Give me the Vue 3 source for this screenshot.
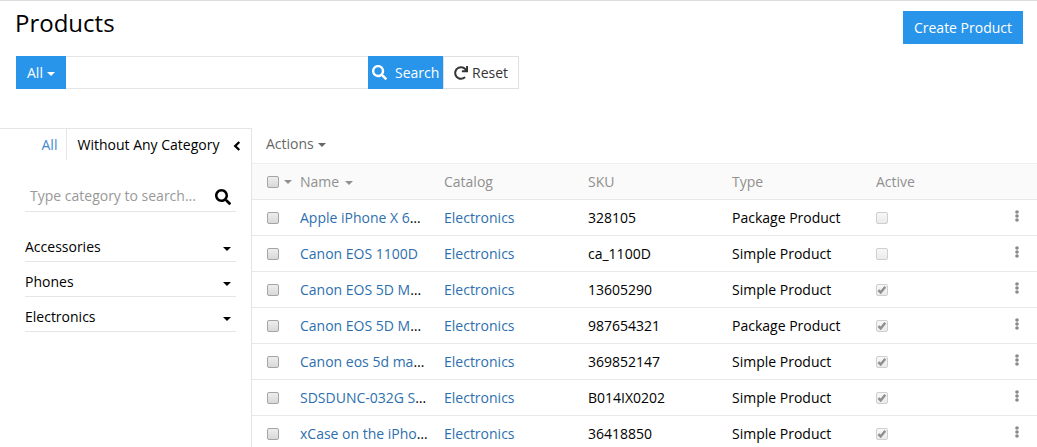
<script setup>
const categories = ['Accessories', 'Phones', 'Electronics']
const columns = ['Catalog', 'SKU', 'Type', 'Active']
const products = [
  { name: 'Apple iPhone X 6', cut: true, sku: '328105', type: 'Package Product', active: false },
  { name: 'Canon EOS 1100D', cut: false, sku: 'ca_1100D', type: 'Simple Product', active: false },
  { name: 'Canon EOS 5D M', cut: true, sku: '13605290', type: 'Simple Product', active: true },
  { name: 'Canon EOS 5D M', cut: true, sku: '987654321', type: 'Package Product', active: true },
  { name: 'Canon eos 5d ma', cut: true, sku: '369852147', type: 'Simple Product', active: true },
  { name: 'SDSDUNC-032G S', cut: true, sku: 'B014IX0202', type: 'Simple Product', active: true },
  { name: 'xCase on the iPho', cut: true, sku: '36418850', type: 'Simple Product', active: true }
]
const searchPath = 'M505 442.7L405.3 343c-4.5-4.5-10.6-7-17-7H372c27.6-35.3 44-79.7 44-128C416 93.1 322.9 0 208 0S0 93.1 0 208s93.1 208 208 208c48.3 0 92.7-16.4 128-44v16.3c0 6.4 2.5 12.5 7 17l99.7 99.7c9.4 9.4 24.6 9.4 33.9 0l28.3-28.3c9.4-9.4 9.4-24.6.1-34zM208 336c-70.7 0-128-57.2-128-128 0-70.7 57.2-128 128-128 70.7 0 128 57.2 128 128 0 70.7-57.2 128-128 128z'
</script>

<template>
  <div class="page">
    <header class="head">
      <h1>Products</h1>
      <button class="btn primary create">Create Product</button>
    </header>
    <div class="searchbar">
      <button class="btn primary all">All<i class="caret"></i></button>
      <input class="query" type="text" />
      <button class="btn primary search">
        <svg width="15" height="15" viewBox="0 0 512 512"><path fill="currentColor" :d="searchPath" /></svg>
        <span>Search</span>
      </button>
      <button class="btn reset">
        <svg width="14" height="14" viewBox="0 0 512 512"><path fill="currentColor" d="M500.33 0h-47.41a12 12 0 0 0-12 12.57l4 82.76A247.42 247.42 0 0 0 256 8C119.34 8 7.9 119.53 8 256.19 8.1 393.07 119.1 504 256 504a247.1 247.1 0 0 0 166.18-63.91 12 12 0 0 0 .48-17.43l-34-34a12 12 0 0 0-16.38-.55A176 176 0 1 1 402.1 157.8l-101.53-4.87a12 12 0 0 0-12.57 12v47.41a12 12 0 0 0 12 12h200.33a12 12 0 0 0 12-12V12a12 12 0 0 0-12-12z" /></svg>
        <span>Reset</span>
      </button>
    </div>
    <div class="body">
      <aside class="side">
        <div class="tabs">
          <a class="tab-all">All</a>
          <span class="tab-none">Without Any Category</span>
          <svg class="collapse" width="8" height="10" viewBox="0 0 8 10"><path d="M6.3 1L2.2 5l4.1 4" fill="none" stroke="#000" stroke-width="2.3" /></svg>
        </div>
        <div class="cat-search">
          <span>Type category to search...</span>
          <svg width="16" height="16" viewBox="0 0 512 512"><path :d="searchPath" /></svg>
        </div>
        <ul class="cats">
          <li v-for="c in categories" :key="c"><span>{{ c }}</span><i class="caret"></i></li>
        </ul>
      </aside>
      <main class="main">
        <div class="actions">Actions<i class="caret"></i></div>
        <div class="row thead">
          <div class="check"><span class="box"></span><i class="caret"></i></div>
          <div class="cell">Name<i class="caret sort"></i></div>
          <div v-for="c in columns" :key="c" class="cell">{{ c }}</div>
        </div>
        <div v-for="p in products" :key="p.sku" class="row">
          <div class="check"><span class="box"></span></div>
          <div class="cell"><a>{{ p.name }}</a><template v-if="p.cut">…</template></div>
          <div class="cell"><a>Electronics</a></div>
          <div class="cell">{{ p.sku }}</div>
          <div class="cell">{{ p.type }}</div>
          <div class="cell flag">
            <span class="box off">
              <svg v-if="p.active" width="10" height="10" viewBox="0 0 10 10"><path d="M1.4 5.2l2.3 2.3L8.3 1.8" fill="none" stroke="#909090" stroke-width="2.5" /></svg>
            </span>
          </div>
          <div class="menu">
            <svg width="4" height="12" viewBox="0 0 4 12" fill="#8a8a8a"><circle cx="2" cy="2" r="1.8" /><circle cx="2" cy="6" r="1.8" /><circle cx="2" cy="10" r="1.8" /></svg>
          </div>
        </div>
      </main>
    </div>
  </div>
</template>

<style>
body { margin: 0; overflow: hidden; background: #fff; }
</style>

<style scoped>
.page {
  box-sizing: border-box;
  height: 447px;
  overflow: hidden;
  display: flex;
  flex-direction: column;
  border-top: 1px solid #dcdcdc;
  font: 14px/20px "Open Sans", sans-serif;
  color: #000;
}
.page * { box-sizing: border-box; }
.head { display: flex; justify-content: space-between; align-items: flex-start; height: 55px; padding: 10px 14px 0 15px; flex: none; }
h1 { margin: -5px 0 0; font-size: 24px; line-height: 33px; font-weight: 400; }
.btn { display: flex; align-items: center; height: 33px; margin: 0; padding: 0; border: 0; font: inherit; white-space: nowrap; }
.primary { background: #2895ea; color: #fff; }
.create { width: 120px; justify-content: center; }
.caret { display: inline-block; flex: none; width: 0; height: 0; border: 4px solid transparent; border-top-color: currentColor; border-bottom: 0; vertical-align: middle; margin-left: 4px; }
.searchbar { display: flex; height: 33px; padding-left: 16px; flex: none; }
.all { width: 50px; padding-left: 11px; }
.all .caret { margin-top: 2px; }
.query { width: 302px; height: 33px; border: solid #e5e5e5; border-width: 1px 0; outline: 0; padding: 0 8px; }
.search { width: 75px; padding-left: 4px; gap: 8px; }
.reset { width: 76px; padding-left: 10px; gap: 4px; border: 1px solid #e0e0e0; background: #fff; color: #333; }
.body { display: flex; flex: 1; min-height: 0; margin-top: 39px; }
.side { width: 252px; flex: none; border: solid #e5e5e5; border-width: 1px 1px 0 0; }
.tabs { display: flex; align-items: center; height: 31px; padding-left: 41px; }
.tab-all { width: 26px; height: 31px; line-height: 32px; padding-left: 0.5px; border-right: 1px solid #e5e5e5; color: #3f8bd0; }
.tab-none { margin-left: 10.5px; width: 155.5px; line-height: 32px; white-space: nowrap; }
.collapse { margin-top: 3px; }
.cat-search { display: flex; justify-content: space-between; align-items: center; height: 31px; margin: 21px 15px 0 25px; padding: 0 5px 0 5px; border-bottom: 1px solid #e5e5e5; color: #999; }
.cat-search svg { margin-top: 2px; }
.cats { list-style: none; margin: 15px 15px 0 25px; padding: 0; }
.cats li { display: flex; justify-content: space-between; align-items: center; height: 35px; padding: 5px 5px 0 0; border-bottom: 1px solid #e5e5e5; }
.cats .caret { margin-top: 4px; }
.main { flex: 1; min-width: 0; }
.actions { height: 35px; padding: 6px 0 0 14px; color: #666; }
.row { display: grid; grid-template-columns: 40px repeat(5, 144px) 1fr; align-items: center; height: 36px; border-bottom: 1px solid #e8e8e8; }
.thead { height: 37px; background: #fafafa; border-top: 1px solid #eee; color: #909090; }
.cell { padding: 0 8px; white-space: nowrap; }
.cell a { color: #2d6fae; }
.check { display: flex; align-items: center; padding-left: 15px; }
.check .caret { margin-left: 5px; margin-top: 1px; }
.sort { margin-left: 6px; }
.box { display: flex; align-items: center; justify-content: center; flex: none; width: 12px; height: 12px; border: 1px solid #a5a5a5; border-radius: 2px; background: linear-gradient(#eee, #d8d8d8); }
.off { border-color: #cfcfcf; background: linear-gradient(#f7f7f7, #ebebeb); }
.menu { padding-left: 3px; display: flex; margin-top: -3px; }
</style>
